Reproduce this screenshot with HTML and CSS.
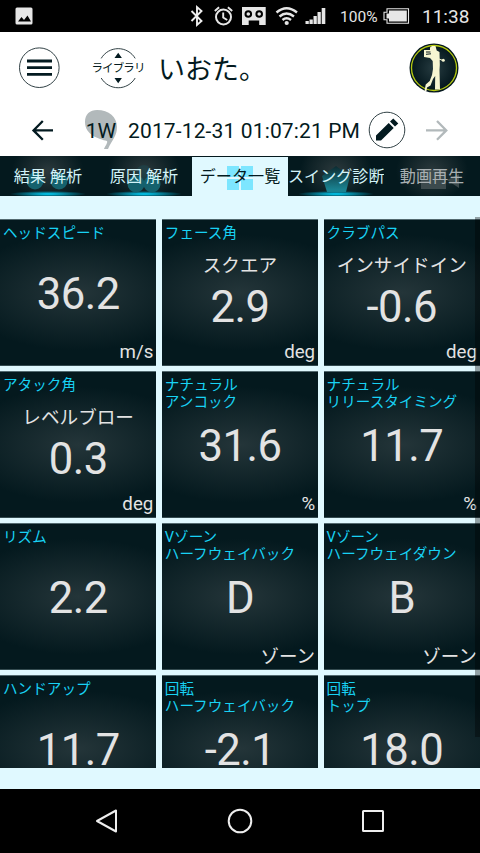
FILE: index.html
```html
<!DOCTYPE html>
<html lang="ja">
<head>
<meta charset="utf-8">
<title>データ一覧</title>
<link rel="stylesheet" href="styles.css">
</head>
<body>
<div class="status">
  <svg class="status-icons" width="480" height="32" viewBox="0 0 480 32">
    <rect x="15.5" y="7.500" width="17" height="17" rx="1.500" fill="#e6e6e6"/>
    <path d="M18 21.500l3.500-4.500 2.500 3 3.500-4.500 3.500 6z" fill="#000"/>
    <path d="M191.500 11l10 10-4.500 4V7l4.500 4-10 10" fill="none" stroke="#eee" stroke-width="1.900"/>
    <circle cx="223.500" cy="17" r="7.500" fill="none" stroke="#e6e6e6" stroke-width="2"/>
    <path d="M223.200 12.500v5l4 2.500M214.800 11l4.300-3.700M232.200 11l-4.300-3.700" fill="none" stroke="#e6e6e6" stroke-width="1.900"/>
    <path d="M242 7h23.700v18h-6.500v-4.500h-10.500V25H242z" fill="#e6e6e6"/>
    <g fill="#e6e6e6" stroke="#000" stroke-width="2"><circle cx="248.300" cy="14" r="2.800"/><circle cx="259.200" cy="14" r="2.800"/></g>
    <g fill="none" stroke="#e6e6e6" stroke-width="2.400"><path d="M276.500 12.500q10-8.500 20.500 0M279.500 16.500q7-6 14.500 0M282.500 20q4-3.500 8.500 0"/></g>
    <circle cx="286.700" cy="23" r="2.100" fill="#e6e6e6"/>
    <path d="M305.500 21h3.300v3h-3.300zM309.500 19.500h3.300V24h-3.300zM313.500 16h3.300v8h-3.300zM317.500 12h3.300v12h-3.300zM321.700 8h3.600v16h-3.600z" fill="#e6e6e6"/>
    <path d="M387 8.800h21.500v14.500H387v-3.500h-3v-7.500h3z" fill="none" stroke="#e6e6e6" stroke-width="1.100"/>
    <path d="M389 10.500h17.800v11H389v-3h-2.500v-5h2.500z" fill="#e6e6e6"/>
  </svg>
  <span class="battery">100%</span><span class="clock">11:38</span>
</div>
<header class="header">
  <svg class="menu" width="42" height="42" viewBox="0 0 42 42"><circle cx="21.300" cy="20.700" r="19.800" fill="none" stroke="#324246"/><path d="M9 14h25M9 20.700h25M9 27.400h25" stroke="#031a20" stroke-width="2.800"/></svg>
  <div class="library">
    <svg width="42" height="42" viewBox="0 0 42 42"><path d="M4.200 11.400a19.700 19.700 0 0 1 34 0M4.200 31a19.700 19.700 0 0 0 34 0" fill="none" stroke="#324246"/><path d="M17.500 11l3.700-5.300 3.700 5.300zM17.500 31l3.700 5.300 3.700-5.300z" fill="#031a20"/></svg>
    <span>ライブラリ</span>
  </div>
  <h1>いおた。</h1>
  <svg class="avatar" width="50" height="50" viewBox="0 0 50 50">
    <defs><radialGradient id="face"><stop offset="0" stop-color="#263b40"/><stop offset="1" stop-color="#04171d"/></radialGradient></defs>
    <circle cx="25" cy="25" r="24.500" fill="#04171d"/><circle cx="25" cy="25" r="22.500" fill="url(#face)" stroke="#b4c812" stroke-width="1.300"/>
    <path d="M21 4.500l2-1.500h3.500l1.200 4.500 2.800 1.500.3 13-.3 5 .5 19.500H26l.2-13.500-2.200 3-2.500 6.500-3.500 2-.5 3.500h-2l1.200-6.500 4-3.500 2.300-6 1-6-.3-8-2.700-3-6-1V7h6z" fill="#f7f6d2"/>
    <path d="M17 9h4.500M17 11.300l5-.5" fill="none" stroke="#04171d" stroke-width="1"/><path d="M30 16l4 1.500" stroke="#f7f6d2"/><circle cx="34.300" cy="17.300" r="1.500" fill="#f7f6d2"/>
  </svg>
</header>
<div class="record">
  <svg class="prev" width="24" height="24" viewBox="0 0 24 24"><path d="M22 12.400H3M11.800 3l-9.300 9.400 9.300 9.400" fill="none" stroke="#031a20" stroke-width="2.300"/></svg>
  <div class="club"><svg width="34" height="42" viewBox="0 0 34 42"><path d="M1 13C1 5 6 1 13 1c12 0 20 7 20 17 0 9-5 13-9 22h-4c1-3 4-6 3-8C15 30 1 26 1 13z" fill="#b2b9bb"/></svg><span>1W</span></div>
  <span class="date">2017-12-31 01:07:21 PM</span>
  <svg class="edit" width="38" height="38" viewBox="0 0 38 38"><circle cx="19" cy="19" r="17.800" fill="none" stroke="#324246"/><path d="M8 29.500v-5L20.700 12l5 5L13 29.500zM22 10.500l3.300-3 5 5-3.300 3z" fill="#031a20"/></svg>
  <svg class="next" width="24" height="24" viewBox="0 0 24 24"><path d="M1 12.400h20M12 3l9.300 9.400-9.300 9.400" fill="none" stroke="#b2b9bb" stroke-width="2.300"/></svg>
</div>
<nav class="tabs">
  <div class="tab glow"><svg viewBox="0 0 96 39"><circle cx="35" cy="24" r="8.500"/><circle cx="59" cy="24" r="8.500"/></svg><span>結果 解析</span></div>
  <div class="tab glow"><svg viewBox="0 0 96 39"><circle cx="40" cy="27" r="8.500"/><circle cx="56" cy="27" r="8.500"/><circle cx="48" cy="16" r="8" opacity=".25"/></svg><span>原因 解析</span></div>
  <div class="tab active"><svg viewBox="0 0 96 39"><path d="M35 9h12v11H35zM49 9h12v11H49zM35 22h12v11H35zM49 22h12v11H49z"/></svg><span>データ一覧</span></div>
  <div class="tab glow"><svg viewBox="0 0 96 39"><defs><linearGradient id="fade" x2="0" y2="1"><stop offset="0" stop-color="#0d2b31"/><stop offset=".9" stop-color="#1a8291"/></linearGradient></defs><path d="M48 9l14 10-4 16H39l-5-16z" fill="url(#fade)"/></svg><span>スイング診断</span></div>
  <div class="tab disabled"><svg viewBox="0 0 96 39"><path d="M37 13h25v19H37zM63 23l12-6v14z"/></svg><span>動画再生</span></div>
</nav>
<main class="content">
  <div class="tiles">
    <section class="tile"><h2>ヘッドスピード</h2><div class="value">36.2</div><div class="unit">m/s</div></section>
    <section class="tile"><h2>フェース角</h2><div class="value with-note"><small>スクエア</small>2.9</div><div class="unit">deg</div></section>
    <section class="tile"><h2>クラブパス</h2><div class="value with-note"><small>インサイドイン</small>-0.6</div><div class="unit">deg</div></section>
    <section class="tile"><h2>アタック角</h2><div class="value with-note"><small>レベルブロー</small>0.3</div><div class="unit">deg</div></section>
    <section class="tile"><h2>ナチュラル<br>アンコック</h2><div class="value">31.6</div><div class="unit">%</div></section>
    <section class="tile"><h2>ナチュラル<br>リリースタイミング</h2><div class="value">11.7</div><div class="unit">%</div></section>
    <section class="tile"><h2>リズム</h2><div class="value">2.2</div></section>
    <section class="tile"><h2>Vゾーン<br>ハーフウェイバック</h2><div class="value">D</div><div class="unit zone">ゾーン</div></section>
    <section class="tile"><h2>Vゾーン<br>ハーフウェイダウン</h2><div class="value">B</div><div class="unit zone">ゾーン</div></section>
    <section class="tile"><h2>ハンドアップ</h2><div class="value">11.7</div></section>
    <section class="tile"><h2>回転<br>ハーフウェイバック</h2><div class="value">-2.1</div></section>
    <section class="tile"><h2>回転<br>トップ</h2><div class="value">18.0</div></section>
  </div>
  <div class="scrollbar"></div>
</main>
<footer class="system-nav">
  <svg width="24" height="26" viewBox="0 0 24 26"><path d="M21 2.500v21L2 13z" fill="none" stroke="#eee" stroke-width="2" stroke-linejoin="round"/></svg>
  <svg width="26" height="26" viewBox="0 0 26 26"><circle cx="13" cy="13" r="11.300" fill="none" stroke="#eee" stroke-width="2"/></svg>
  <svg width="24" height="26" viewBox="0 0 24 26"><rect x="2" y="3" width="20" height="20" rx=".5" fill="none" stroke="#eee" stroke-width="2"/></svg>
</footer>
</body>
</html>
```

FILE: styles.css
```css
* { box-sizing: border-box; }
body {
  margin: 0;
  width: 480px;
  height: 853px;
  overflow: hidden;
  display: flex;
  flex-direction: column;
  background: #fff;
  color: #031a20;
  font-family: Roboto, "Noto Sans CJK JP", sans-serif;
}
svg { display: block; flex: none; }
h1, h2 { margin: 0; font-weight: 400; }
span { white-space: nowrap; }

.status {
  height: 32px;
  flex: none;
  display: grid;
  grid-template-columns: 340px 82px 58px;
  align-items: center;
  background: #000;
  color: #e6e6e6;
}
.status-icons { grid-area: 1 / 1 / 2 / 4; }
.battery { grid-area: 1 / 2; font-size: 15.500px; padding-top: 2px; }
.clock { grid-area: 1 / 3; font-size: 19px; padding-top: 1px; }

.header {
  height: 72px;
  flex: none;
  display: flex;
  align-items: center;
  padding: 0 21px 0 18px;
}
.library {
  width: 54px;
  margin-left: 31px;
  display: grid;
  place-items: center;
}
.library > * { grid-area: 1 / 1; }
.library span { font-size: 11.500px; line-height: 12px; letter-spacing: -.9px; }
.header h1 { font-size: 27px; line-height: 36px; margin-left: 13px; padding-top: 3px; }
.avatar { margin-left: auto; }

.record {
  height: 52px;
  flex: none;
  display: flex;
  align-items: center;
}
.prev { margin-left: 31px; }
.club {
  width: 34px;
  margin-left: 29px;
  display: grid;
  place-items: center;
}
.club > * { grid-area: 1 / 1; }
.club span, .date { font-size: 21px; line-height: 24px; padding-top: 1px; }
.date { margin-left: 10px; width: 232px; letter-spacing: .14px; }
.edit { margin-left: 8px; }
.next { margin-left: 19px; }

.tabs {
  height: 39.500px;
  flex: none;
  display: grid;
  grid-template-columns: repeat(5, 96px);
  background: #04191e;
}
.tab {
  display: grid;
  place-items: center;
  color: #d2f3f8;
  font-size: 16.100px;
  line-height: 20px;
  background: radial-gradient(ellipse 36px 30px at 48px 15px, #2b393c, #04191e);
}
.tab > * { grid-area: 1 / 1; }
.tab span { padding-top: 2px; }
.tab svg { width: 96px; height: 39px; fill: #15616d; }
.glow { background: radial-gradient(ellipse 38px 3px at 48px 38px, #00d6ff, transparent), radial-gradient(ellipse 36px 30px at 48px 15px, #2b393c, #04191e); }
.active { background: #e0f9ff; color: #031a20; margin-top: 1px; }
.active span { padding-top: 0; }
.active svg { fill: #7de6ff; }
.disabled { color: #a9b0b2; }
.disabled svg { fill: #3c4a4d; }

.content {
  height: 593.500px;
  flex: none;
  padding: 23.500px 0 21px;
  background: #e0f9ff;
  position: relative;
}
.tiles {
  height: 549px;
  overflow: hidden;
  display: grid;
  grid-template-columns: repeat(3, 156.300px);
  grid-auto-rows: 146.500px;
  gap: 5.500px;
}
.tile {
  display: grid;
  grid-template: 100% / 100%;
  border-top: 1px solid #536a70;
  border-bottom: 1px solid #344b50;
  background: radial-gradient(ellipse 120px 58px at 50% 50%, #243539, #04191e);
  color: #e3e3e3;
}
.tile > * { grid-area: 1 / 1; }
.tile h2 {
  color: #18d2f4;
  font-size: 14.600px;
  line-height: 17.500px;
  padding: 4.600px 0 0 3px;
  white-space: nowrap;
}
.value {
  align-self: center;
  text-align: center;
  font-size: 43.600px;
  line-height: 36px;
  letter-spacing: -.5px;
  padding-top: 5px;
}
.value small {
  display: block;
  font-size: 18.600px;
  line-height: 28px;
  letter-spacing: 0;
  margin-bottom: 10px;
}
.with-note { padding: 0 0 6px; }
.unit {
  place-self: end;
  font-size: 18.700px;
  line-height: 22px;
  padding: 0 3px 2px 0;
}
.unit.zone { font-size: 18.500px; padding-bottom: 1px; }
.scrollbar {
  position: absolute;
  right: 0;
  top: 21px;
  width: 5px;
  height: 520px;
  background: rgba(0, 0, 0, .35);
}

.system-nav {
  flex: 1;
  display: flex;
  justify-content: center;
  align-items: center;
  gap: 108px;
  background: #000;
}
```
